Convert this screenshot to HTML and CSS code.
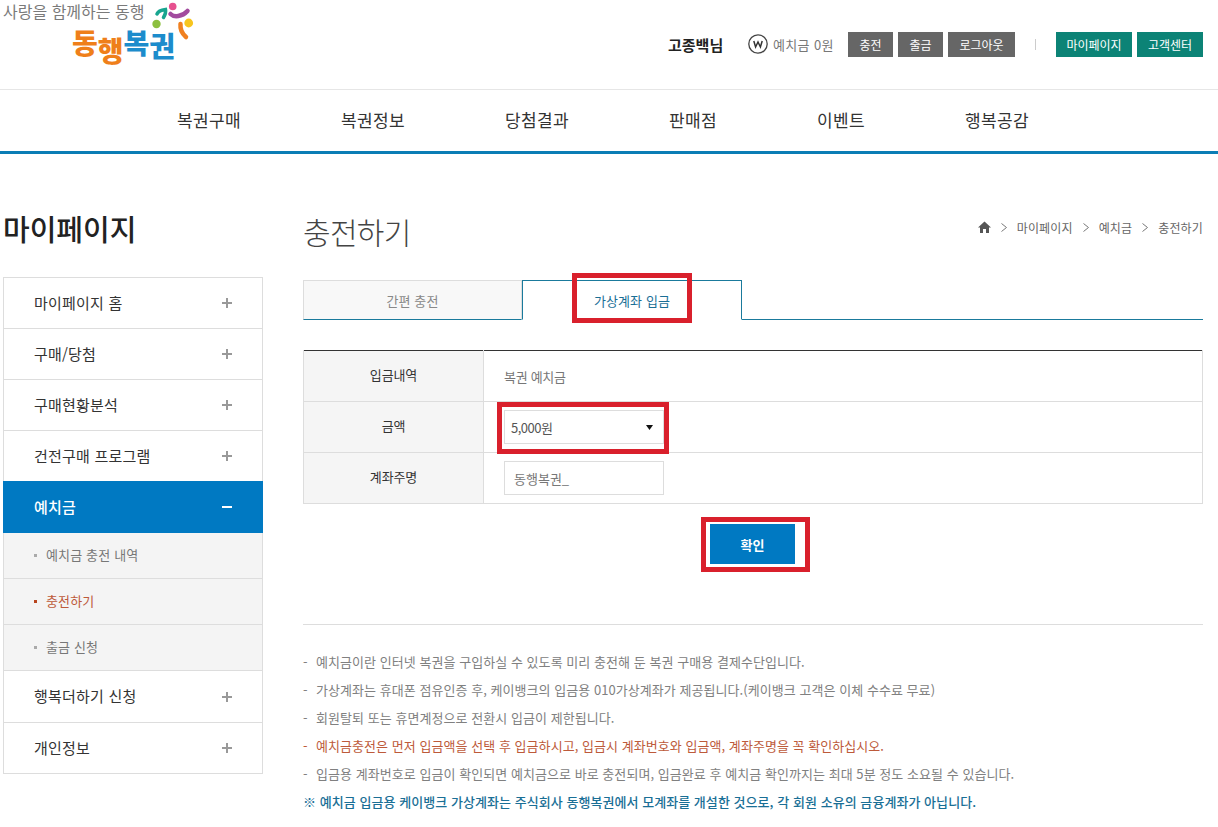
FILE: index.html
```html
<!DOCTYPE html>
<html lang="ko">
<head>
<meta charset="utf-8">
<title>충전하기</title>
<link rel="stylesheet" href="styles.css">
</head>
<body>
<header class="top">
  <div class="logo">
    <div class="tagline">사랑을 함께하는 동행</div>
    <div class="brand"><span class="o">동</span><span class="o drop">행</span><span class="b">복</span><span class="b drop2">권</span></div>
    <svg class="logo-mark" width="46" height="42" viewBox="0 0 46 42">
      <circle cx="20.700" cy="6.500" r="3.800" fill="#e6508f"/>
      <circle cx="36.700" cy="23" r="4.400" fill="#f7c51e"/>
      <circle cx="4.500" cy="24" r="4.200" fill="#8cbf3f"/>
      <path d="M5 14C6 11.500 9 10 13.500 9.500C14 12 13 15 11.500 17.500" fill="none" stroke="#17a58f" stroke-width="3.500" stroke-linecap="round"/>
      <path d="M18.500 14C22 17.500 30 17 35.500 11" fill="none" stroke="#a24a9e" stroke-width="4.500" stroke-linecap="round"/>
      <path d="M28.500 24C28 29 30.500 34 34 37" fill="none" stroke="#f08020" stroke-width="4.500" stroke-linecap="round"/>
    </svg>
  </div>
  <div class="util">
    <strong class="user">고종백님</strong>
    <span class="wallet">
      <svg class="w-icon" width="20" height="20" viewBox="0 0 20 20"><circle cx="10" cy="10" r="9.200" fill="#fff" stroke="#444" stroke-width="1.300"/><path d="M5.800 7l1.800 6 2.400-5 2.400 5 1.800-6" fill="none" stroke="#333" stroke-width="1.500"/></svg>
      예치금 0원
    </span>
    <div class="btns">
      <a class="btn gray w45">충전</a>
      <a class="btn gray w45">출금</a>
      <a class="btn gray w67">로그아웃</a>
    </div>
    <span class="sep"></span>
    <div class="btns">
      <a class="btn teal w76">마이페이지</a>
      <a class="btn teal w66">고객센터</a>
    </div>
  </div>
</header>
<nav class="gnb">
  <a>복권구매</a><a>복권정보</a><a>당첨결과</a><a>판매점</a><a>이벤트</a><a>행복공감</a>
</nav>
<div class="wrap">
  <aside class="side">
    <h2 class="side-title">마이페이지</h2>
    <ul class="menu">
      <li class="m"><span>마이페이지 홈</span><i class="plus"></i></li>
      <li class="m"><span>구매/당첨</span><i class="plus"></i></li>
      <li class="m"><span>구매현황분석</span><i class="plus"></i></li>
      <li class="m"><span>건전구매 프로그램</span><i class="plus"></i></li>
      <li class="m active"><span>예치금</span><i class="minus"></i></li>
      <li class="s">예치금 충전 내역</li>
      <li class="s on">충전하기</li>
      <li class="s">출금 신청</li>
      <li class="m"><span>행복더하기 신청</span><i class="plus"></i></li>
      <li class="m last"><span>개인정보</span><i class="plus"></i></li>
    </ul>
  </aside>
  <main class="main">
    <div class="head">
      <h1 class="title">충전하기</h1>
      <div class="crumb">
        <svg width="13" height="12" viewBox="0 0 13 12"><path d="M6.500 .5L0 6.500h2V12h3V8h3v4h3V6.500h2z" fill="#555"/></svg>
        <svg class="gt" width="6" height="9" viewBox="0 0 6 9"><path d="M.5 .5l5 4-5 4" fill="none" stroke="#777"/></svg><span>마이페이지</span>
        <svg class="gt" width="6" height="9" viewBox="0 0 6 9"><path d="M.5 .5l5 4-5 4" fill="none" stroke="#777"/></svg><span>예치금</span>
        <svg class="gt" width="6" height="9" viewBox="0 0 6 9"><path d="M.5 .5l5 4-5 4" fill="none" stroke="#777"/></svg><span>충전하기</span>
      </div>
    </div>
    <div class="tabs">
      <a class="tab">간편 충전</a>
      <a class="tab sel">가상계좌 입금<span class="mark mark-tab"></span></a>
    </div>
    <table class="form">
      <tr><th>입금내역</th><td class="plain">복권 예치금</td></tr>
      <tr><th>금액</th><td><div class="select"><span>5,000원</span><svg width="7" height="5" viewBox="0 0 7 5"><path d="M0 0h7L3.500 5z" fill="#111"/></svg><span class="mark mark-sel"></span></div></td></tr>
      <tr><th>계좌주명</th><td><input class="field" type="text" value="동행복권_"></td></tr>
    </table>
    <div class="actions"><button class="ok" type="button">확인<span class="mark mark-ok"></span></button></div>
    <ul class="notes">
      <li>예치금이란 인터넷 복권을 구입하실 수 있도록 미리 충전해 둔 복권 구매용 결제수단입니다.</li>
      <li>가상계좌는 휴대폰 점유인증 후, 케이뱅크의 입금용 010가상계좌가 제공됩니다.(케이뱅크 고객은 이체 수수료 무료)</li>
      <li>회원탈퇴 또는 휴면계정으로 전환시 입금이 제한됩니다.</li>
      <li class="warn">예치금충전은 먼저 입금액을 선택 후 입금하시고, 입금시 계좌번호와 입금액, 계좌주명을 꼭 확인하십시오.</li>
      <li>입금용 계좌번호로 입금이 확인되면 예치금으로 바로 충전되며, 입금완료 후 예치금 확인까지는 최대 5분 정도 소요될 수 있습니다.</li>
      <li class="info">※ 예치금 입금용 케이뱅크 가상계좌는 주식회사 동행복권에서 모계좌를 개설한 것으로, 각 회원 소유의 금융계좌가 아닙니다.</li>
    </ul>
  </main>
</div>
</body>
</html>
```
FILE: styles.css
```css
* { box-sizing: border-box; }
html, body { margin: 0; padding: 0; }
body {
  background: #fff;
  color: #333;
  font-family: "Noto Sans CJK KR", "Noto Sans", sans-serif;
  font-size: 13px;
  overflow: hidden;
  height: 827px;
}
ul { list-style: none; margin: 0; padding: 0; }
h1, h2 { margin: 0; font-weight: 400; }

.top {
  height: 90px;
  border-bottom: 1px solid #e6e6e6;
  display: flex;
  justify-content: space-between;
  padding: 0 15px 0 3px;
}
.logo { position: relative; width: 200px; }
.tagline {
  margin-top: 1px;
  font-size: 16px;
  line-height: 20px;
  color: #7a7a7a;
}
.brand {
  margin: 3px 0 0 69px;
  font-size: 28px;
  line-height: 36px;
  font-weight: 900;
  white-space: nowrap;
}
.brand span { display: inline-block; }
.brand .o { color: #ef7f1a; }
.brand .b { color: #1c8ccc; }
.brand .drop { transform: translateY(8px); }
.brand .drop2 { transform: translateY(3px); }
.logo-mark { position: absolute; left: 149px; top: 0; }

.util { display: flex; align-items: center; height: 90px; padding-bottom: 2px; }
.user { width: 80px; font-size: 15px; font-weight: 700; color: #222; }
.wallet {
  display: flex;
  align-items: center;
  gap: 5px;
  width: 100px;
  color: #777;
  font-size: 13px;
  letter-spacing: .35px;
}
.w-icon { flex: none; }
.btns { display: flex; gap: 5px; }
.btn {
  display: flex;
  align-items: center;
  justify-content: center;
  height: 25px;
  color: #fff;
  font-size: 12px;
}
.gray { background: #666; }
.teal { background: #0c8376; }
.w45 { width: 45px; }
.w67 { width: 67px; }
.w76 { width: 76px; }
.w66 { width: 66px; }
.sep { width: 1px; height: 11px; background: #ccc; margin: 0 20px; }

.gnb {
  height: 64px;
  border-bottom: 3px solid #0b7db5;
  display: flex;
  align-items: center;
  gap: 100px;
  padding: 0 0 2px 177px;
  font-size: 17px;
  color: #333;
  letter-spacing: .36px;
}

.wrap { display: flex; padding: 0 15px 0 3px; }
.side { width: 260px; flex: none; }
.side-title {
  margin-top: 53px;
  font-size: 29px;
  line-height: 42px;
  font-weight: 500;
  color: #222;
}
.menu { margin-top: 28px; border: 1px solid #ddd; border-top: 0; }
.m {
  height: 51px;
  border-top: 1px solid #ddd;
  display: flex;
  align-items: center;
  justify-content: space-between;
  padding: 0 30px 2px;
  font-size: 15px;
  color: #333;
  letter-spacing: .2px;
}
.m.active {
  height: 52px;
  margin: 0 -1px;
  padding: 0 31px 2px;
  border-top: 0;
  background: #0079c2;
  color: #fff;
  font-weight: 500;
}
.plus, .minus { position: relative; display: block; width: 10px; height: 10px; margin-top: 2px; }
.plus::before, .minus::before {
  content: "";
  position: absolute;
  left: 0; right: 0; top: 4px;
  height: 2px;
  background: #999;
}
.plus::after {
  content: "";
  position: absolute;
  top: 0; bottom: 0; left: 4px;
  width: 2px;
  background: #999;
}
.minus::before { background: #fff; }
.s {
  position: relative;
  height: 46px;
  background: #f4f4f4;
  border-bottom: 1px solid #ddd;
  padding: 0 0 2px 42px;
  display: flex;
  align-items: center;
  font-size: 13px;
  color: #777;
  letter-spacing: .15px;
}
.s::before {
  content: "";
  position: absolute;
  left: 30px; top: 21px;
  width: 3px; height: 3px;
  background: #aaa;
}
.s.on { color: #bd5a3a; }
.s.on::before { background: #b8451e; }
.s + .m { border-top: 0; }

.main { width: 900px; margin-left: 40px; flex: none; }
.head { display: flex; justify-content: space-between; margin-top: 55px; height: 71px; }
.title { font-size: 30px; line-height: 44px; font-weight: 300; color: #444; letter-spacing: -.7px; }
.crumb {
  display: flex;
  align-items: center;
  height: 36px;
  gap: 10px;
  font-size: 12px;
  color: #666;
  letter-spacing: .15px;
}

.tabs { display: flex; height: 40px; border-bottom: 1px solid #1a7a9c; }
.tab {
  width: 219px;
  height: 40px;
  display: flex;
  align-items: center;
  justify-content: center;
  background: #f8f8f8;
  border: 1px solid #ddd;
  border-bottom: 1px solid #1a7a9c;
  font-size: 13px;
  color: #888;
  letter-spacing: .1px;
}
.tab.sel {
  position: relative;
  width: 220px;
  background: #fff;
  border: 1px solid #1a7a9c;
  border-bottom: 1px solid #fff;
  color: #1a6f96;
}

.mark { position: absolute; border: 5px solid #d9202c; pointer-events: none; }
.mark-tab { left: 49px; top: -8px; width: 120px; height: 50px; }
.mark-sel { left: -8px; top: -9px; width: 172px; height: 52px; }
.mark-ok { left: -9px; top: -7px; width: 109px; height: 55px; }

.form {
  margin-top: 30px;
  width: 900px;
  border-collapse: collapse;
  border-top: 1px solid #333;
  table-layout: fixed;
}
.form th, .form td { height: 51px; border-bottom: 1px solid #ddd; padding: 0; font-size: 13px; }
.form th {
  width: 180px;
  background: #f5f5f5;
  border-left: 1px solid #ddd;
  border-right: 1px solid #ddd;
  padding-bottom: 3px;
  font-weight: 400;
  color: #333;
  letter-spacing: -.1px;
}
.form td { padding-left: 20px; border-right: 1px solid #ddd; }
.form td.plain { color: #777; letter-spacing: -.3px; }
.select {
  position: relative;
  width: 160px;
  height: 34px;
  border: 1px solid #ddd;
  display: flex;
  align-items: center;
  justify-content: space-between;
  padding: 0 10px 0 6px;
  color: #555;
  letter-spacing: -.5px;
}
.field {
  display: block;
  width: 160px;
  height: 34px;
  border: 1px solid #ddd;
  padding: 0 9px;
  font: inherit;
  font-size: 13px;
  color: #777;
}

.actions { display: flex; justify-content: center; padding: 20px 1px 0 0; }
.ok {
  position: relative;
  width: 85px;
  height: 40px;
  border: 0;
  padding: 0;
  background: #0079c2;
  color: #fff;
  font: inherit;
  font-size: 13px;
  font-weight: 700;
}
.notes {
  margin-top: 60px;
  padding-top: 23px;
  border-top: 1px solid #ddd;
  font-size: 13px;
  line-height: 28px;
  color: #808080;
  letter-spacing: .05px;
}
.notes li { position: relative; padding-left: 13px; white-space: nowrap; }
.notes li::before { content: "-"; position: absolute; left: 0; }
.notes .warn { color: #bd5a3a; }
.notes .info { padding-left: 0; color: #1a6f96; font-weight: 500; }
.notes .info::before { content: none; }
```
